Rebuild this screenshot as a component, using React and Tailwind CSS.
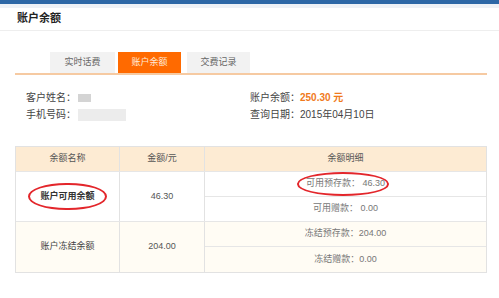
import React from "react";

const font = { fontFamily: '"Liberation Sans", "Noto Sans CJK SC", sans-serif' };

const Ellipse = ({ className }) => (
  <span className={`pointer-events-none absolute rounded-[50%] border-[2.5px] border-[#e3262b] ${className}`}></span>
);

export default function App() {
  return (
    <div style={font} className="w-[499px] h-[298px] bg-white overflow-hidden text-[#555]">
      <div className="h-[4px] bg-[#2d67a6]"></div>
      <div className="h-[4px] bg-[#eef1f6]"></div>
      <div className="h-[23px] border-b border-[#eeeeee] flex items-center pl-[17px] pb-[1px]">
        <span className="text-[11px] font-bold text-[#222]">账户余额</span>
      </div>

      <div className="pt-[21px] pl-[15px] pr-[12px]">
        <div className="flex items-end pl-[35px] gap-[3px] h-[21px]">
          <div className="w-[65px] h-[21px] bg-[#f2f2f2] flex items-center justify-center text-[9px] text-[#666]">实时话费</div>
          <div className="w-[63px] h-[21px] bg-[#ff6a00] flex items-center justify-center text-[9px] text-[#ffe9d8]">账户余额</div>
          <div className="ml-[3px] w-[63px] h-[21px] bg-[#f2f2f2] flex items-center justify-center text-[9px] text-[#666]">交费记录</div>
        </div>
        <div className="h-[2px] bg-[#f6caa2]"></div>

        <div className="pl-[11px] pt-[14px] flex text-[10px] text-[#444] leading-[17px]">
          <div className="w-[224px]">
            <div className="flex items-center">客户姓名：<span className="ml-[2px] w-[13px] h-[8px] bg-[#d4d4d4]"></span></div>
            <div className="flex items-center">手机号码：<span className="ml-[2px] w-[48px] h-[12px] bg-[#ececec]"></span></div>
          </div>
          <div>
            <div>账户余额：<span className="font-bold text-[#f07a1c]">250.30 元</span></div>
            <div>查询日期：2015年04月10日</div>
          </div>
        </div>

        <div className="mt-[23px] w-[472px] border border-[#e2e2e2] text-[9px] text-[#555]">
          <div className="flex h-[25px] bg-[#fdebd3] border-b border-[#e6e6e6]">
            <div className="w-[104px] border-r border-[#e2e2e2] flex items-center justify-center">余额名称</div>
            <div className="w-[85px] border-r border-[#e2e2e2] flex items-center justify-center">金额/元</div>
            <div className="flex-1 flex items-center justify-center">余额明细</div>
          </div>
          <div className="flex h-[50px] border-b border-[#e6e6e6]">
            <div className="w-[104px] border-r border-[#e2e2e2] flex items-center justify-center font-bold text-[#333]">
              <span className="relative">
                账户可用余额
                <Ellipse className="-left-[12px] -right-[12px] -top-[7px] -bottom-[7px]" />
              </span>
            </div>
            <div className="w-[85px] border-r border-[#e2e2e2] flex items-center justify-center">46.30</div>
            <div className="flex-1 flex flex-col">
              <div className="h-[25px] border-b border-[#e6e6e6] flex items-center justify-center text-[#777]">
                <span className="relative">
                  可用预存款： 46.30
                  <Ellipse className="-left-[9px] -right-[4px] -top-[5px] -bottom-[5px]" />
                </span>
              </div>
              <div className="flex-1 flex items-center justify-center text-[#777]">可用赠款： 0.00</div>
            </div>
          </div>
          <div className="flex h-[50px] bg-[#fffcf4]">
            <div className="w-[104px] border-r border-[#e2e2e2] flex items-center justify-center text-[#444]">账户冻结余额</div>
            <div className="w-[85px] border-r border-[#e2e2e2] flex items-center justify-center">204.00</div>
            <div className="flex-1 flex flex-col">
              <div className="h-[25px] border-b border-[#e6e6e6] flex items-center justify-center text-[#777]">冻结预存款：204.00</div>
              <div className="flex-1 flex items-center justify-center text-[#777]">冻结赠款：0.00</div>
            </div>
          </div>
        </div>
      </div>
    </div>
  );
}
